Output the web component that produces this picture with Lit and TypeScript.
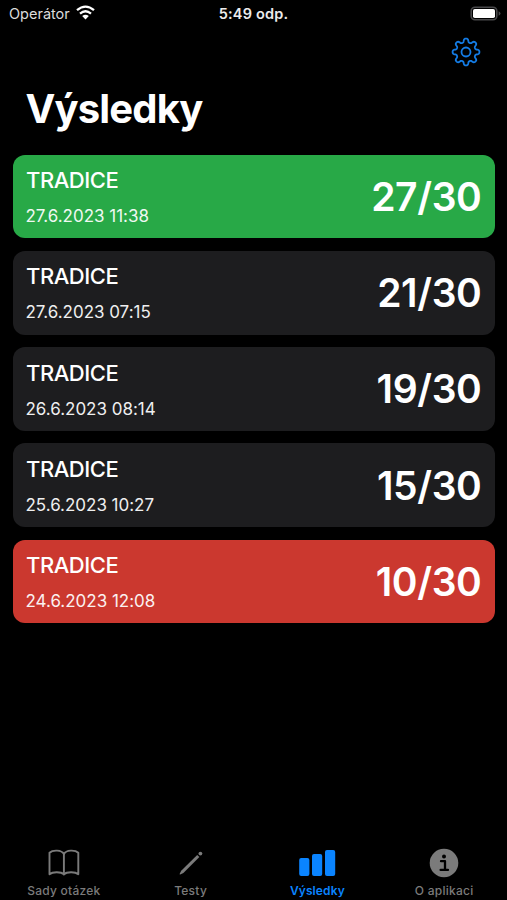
import { LitElement, html, css, svg } from "lit";
import { customElement, property } from "lit/decorators.js";
import { classMap } from "lit/directives/class-map.js";

interface Result {
  name: string;
  date: string;
  score: string;
  tone: "pass" | "plain" | "fail";
}

const RESULTS: Result[] = [
  { name: "TRADICE", date: "27.6.2023 11:38", score: "27/30", tone: "pass" },
  { name: "TRADICE", date: "27.6.2023 07:15", score: "21/30", tone: "plain" },
  { name: "TRADICE", date: "26.6.2023 08:14", score: "19/30", tone: "plain" },
  { name: "TRADICE", date: "25.6.2023 10:27", score: "15/30", tone: "plain" },
  { name: "TRADICE", date: "24.6.2023 12:08", score: "10/30", tone: "fail" },
];

// Eight rounded teeth, traced as a smooth closed outline around (15, 15).
const GEAR = Array.from({ length: 192 }, (_, i) => {
  const a = (i / 192) * Math.PI * 2;
  const r = 11.6 + 1.8 * Math.tanh(1.8 * Math.cos(8 * a)) / Math.tanh(1.8);
  return `${i ? "L" : "M"}${(15 + r * Math.cos(a)).toFixed(2)} ${(15 + r * Math.sin(a)).toFixed(2)}`;
}).join("") + "Z";

const ICONS = {
  book: svg`<g fill="none" stroke="currentColor" stroke-width="1.9" stroke-linejoin="round" stroke-linecap="round">
    <path d="M20.9 7C18.6 2.8 9.8 2.6 6.5 5.8V27.2C9.6 24.6 18 24.6 20.9 27.4C23.8 24.6 32.2 24.6 35.3 27.2V5.8C32 2.6 23.2 2.8 20.9 7Z"/>
    <path d="M20.9 7V27.4"/></g>`,
  pencil: svg`<g fill="currentColor"><path d="M27.2 7.9L29.4 10.1L13.4 26L10.2 27.4Q9.4 27.6 9.7 26.8L11.2 23.7Z"/>
    <circle cx="30.4" cy="6.6" r="1.9"/></g>`,
  bars: svg`<g fill="currentColor"><rect x="2.2" y="11" width="10.2" height="18" rx="2"/>
    <rect x="15" y="7" width="10.2" height="22" rx="2"/><rect x="28" y="3" width="10.2" height="26" rx="2"/></g>`,
  info: svg`<circle cx="20" cy="16" r="14.3" fill="currentColor"/>
    <circle cx="20" cy="9.4" r="2" fill="#000"/>
    <path d="M17 14.2H21V22.7M16.6 22.9H24" fill="none" stroke="#000" stroke-width="2.3" stroke-linecap="round" stroke-linejoin="round"/>`,
};

@customElement("result-card")
export class ResultCard extends LitElement {
  @property({ attribute: false }) result!: Result;

  static styles = css`
    :host { display: block; }
    .card {
      box-sizing: border-box; height: 83.6px; border-radius: 12px;
      padding: 0 13px 0 13px; display: flex; align-items: center;
      justify-content: space-between; background: #1d1d1f; color: #fff;
    }
    .pass { background: #28a947; }
    .fail { background: #cb382f; }
    .info { display: flex; flex-direction: column; gap: 12px; padding-top: 1.4px; }
    .name { font-size: 22px; line-height: 26px; font-weight: 550; letter-spacing: -0.45px; }
    .date { font-size: 17px; line-height: 22px; opacity: 0.93; letter-spacing: -0.02px; margin-left: -0.5px; }
    .score { font-size: 39px; line-height: 46px; font-weight: 580; letter-spacing: -0.35px; padding-top: 1px; }
  `;

  render() {
    const r = this.result;
    return html`<div class=${classMap({ card: true, [r.tone]: true })}>
      <div class="info"><span class="name">${r.name}</span><span class="date">${r.date}</span></div>
      <span class="score">${r.score}</span>
    </div>`;
  }
}

@customElement("tab-item")
export class TabItem extends LitElement {
  @property() label = "";
  @property() icon: keyof typeof ICONS = "book";
  @property({ type: Boolean }) active = false;

  static styles = css`
    :host { display: block; flex: 1; }
    .tab { display: flex; flex-direction: column; align-items: center; color: #7b7b7b; }
    .active { color: #0a84ff; }
    .icon { display: block; width: 40px; height: 32px; }
    .label { margin: 4px 0 0 1px; font-size: 12px; line-height: 16px; font-weight: 500; letter-spacing: 0.25px; white-space: nowrap; }
    .active .label { font-weight: 600; letter-spacing: 0.1px; }
  `;

  render() {
    return html`<div class=${classMap({ tab: true, active: this.active })}>
      <svg class="icon" viewBox="0 0 40 32">${ICONS[this.icon]}</svg>
      <span class="label">${this.label}</span>
    </div>`;
  }
}

@customElement("app-root")
export class AppRoot extends LitElement {
  static styles = css`
    :host {
      display: flex; flex-direction: column; box-sizing: border-box;
      height: 900px; overflow: hidden; background: #000; color: #fff;
      font-family: Inter, "Liberation Sans", sans-serif;
    }
    .status { display: grid; grid-template-columns: 1fr auto 1fr; align-items: center; height: 27px; padding: 0 6px 0 9px; }
    .carrier { display: flex; align-items: center; gap: 6px; font-size: 14.5px; color: #dcdcdc; }
    .wifi { width: 19px; height: 15px; margin-top: -2px; }
    .clock { font-size: 14.5px; font-weight: 600; color: #ececec; letter-spacing: 0.2px; margin-right: 3px; }
    .battery { justify-self: end; width: 31px; height: 15px; margin-top: -1px; }
    .nav { display: flex; justify-content: flex-end; height: 30px; padding: 10px 26px 0 0; }
    .gear { width: 30px; height: 30px; color: #147ce5; }
    .title { margin: 18px 0 0 25.5px; font-size: 40px; line-height: 48px; font-weight: 700; letter-spacing: -0.85px; }
    .list { display: flex; flex-direction: column; gap: 12.6px; padding: 21.8px 12.5px 0 13px; }
    .tabs { display: flex; margin-top: auto; height: 53px; }
  `;

  render() {
    return html`
      <header class="status">
        <div class="carrier"><span>Operátor</span>
          <svg class="wifi" viewBox="0 0 19 15"><g fill="none" stroke="#fff" stroke-width="2.3">
            <path d="M1 5.2Q9.5 -2 18 5.2"/><path d="M4 8.6Q9.5 3.9 15 8.6"/></g>
            <path d="M9.5 14.4L6.2 11.1Q9.5 8.5 12.8 11.1Z" fill="#fff"/></svg>
        </div>
        <span class="clock">5:49 odp.</span>
        <svg class="battery" viewBox="0 0 31 15">
          <rect x="1.2" y="1.2" width="25.6" height="12.6" rx="3.8" fill="none" stroke="#48484a" stroke-width="1.6"/>
          <rect x="3" y="3" width="22" height="9" rx="1.8" fill="#fff"/>
          <path d="M28.6 5.3Q30.5 6 30.5 7.5T28.6 9.7Z" fill="#48484a"/></svg>
      </header>
      <div class="nav">
        <svg class="gear" viewBox="0 0 30 30" fill="none" stroke="currentColor" stroke-width="1.8" stroke-linejoin="round">
          <path d=${GEAR}></path><circle cx="15" cy="15" r="4.5"></circle></svg>
      </div>
      <h1 class="title">Výsledky</h1>
      <main class="list">${RESULTS.map((r) => html`<result-card .result=${r}></result-card>`)}</main>
      <nav class="tabs">
        <tab-item icon="book" label="Sady otázek"></tab-item>
        <tab-item icon="pencil" label="Testy"></tab-item>
        <tab-item icon="bars" label="Výsledky" active></tab-item>
        <tab-item icon="info" label="O aplikaci"></tab-item>
      </nav>`;
  }
}
